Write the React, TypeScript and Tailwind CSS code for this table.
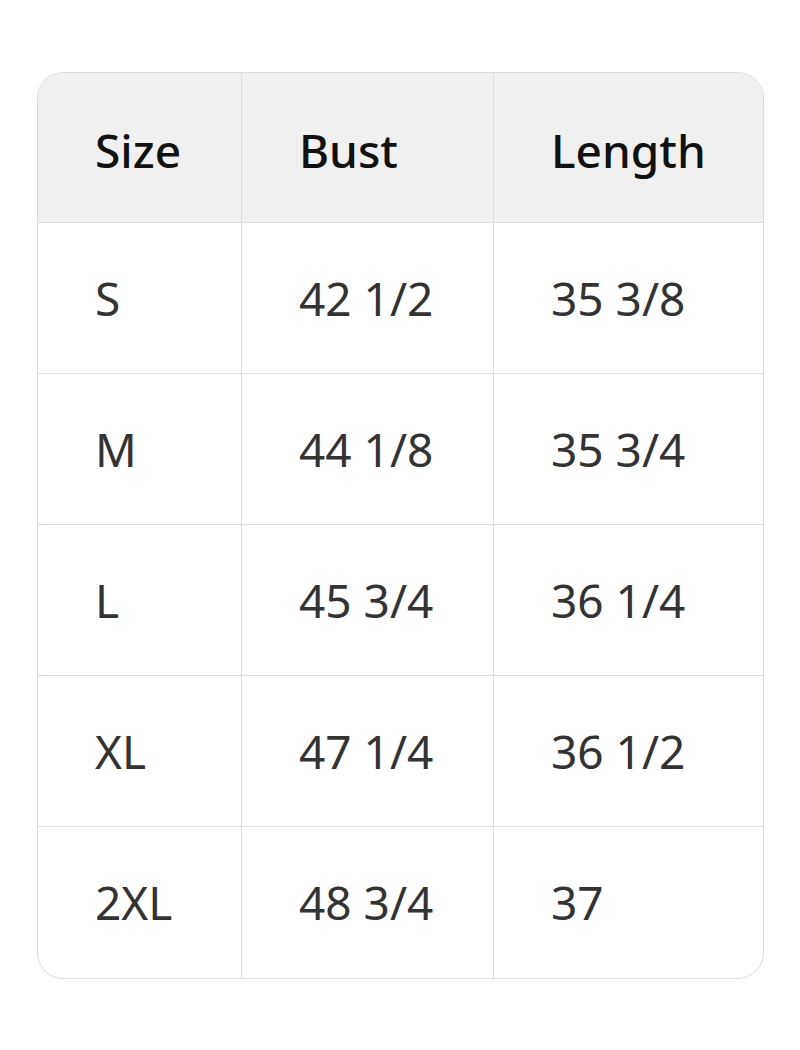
const rows = [
  ["S", "42 1/2", "35 3/8"],
  ["M", "44 1/8", "35 3/4"],
  ["L", "45 3/4", "36 1/4"],
  ["XL", "47 1/4", "36 1/2"],
  ["2XL", "48 3/4", "37"],
];

export default function App() {
  return (
    <div className="min-h-[1050px] w-[800px] bg-white pt-[72px] pl-[37px] font-['Noto_Sans',sans-serif]">
      <div className="w-[727px] overflow-hidden rounded-[26px] border border-[#d8dde4]">
        <div className="grid grid-cols-[203px_252px_270px]">
          {["Size", "Bust", "Length"].map((h, i) => (
            <div
              key={h}
              className={`flex h-[150px] items-center bg-[#f0f0f0] pt-[6px] pl-[57px] text-[46px] font-medium text-[#111111] border-b border-[#d8dde4] ${i > 0 ? "border-l" : ""}`}
            >
              {h}
            </div>
          ))}
          {rows.map((r, ri) =>
            r.map((c, ci) => (
              <div
                key={ri + "-" + ci}
                className={`flex h-[151px] items-center pl-[57px] text-[46px] text-[#333333] border-[#d8dde4] ${ci > 0 ? "border-l" : ""} ${ri < rows.length - 1 ? "border-b" : ""}`}
              >
                {c}
              </div>
            ))
          )}
        </div>
      </div>
    </div>
  );
}
